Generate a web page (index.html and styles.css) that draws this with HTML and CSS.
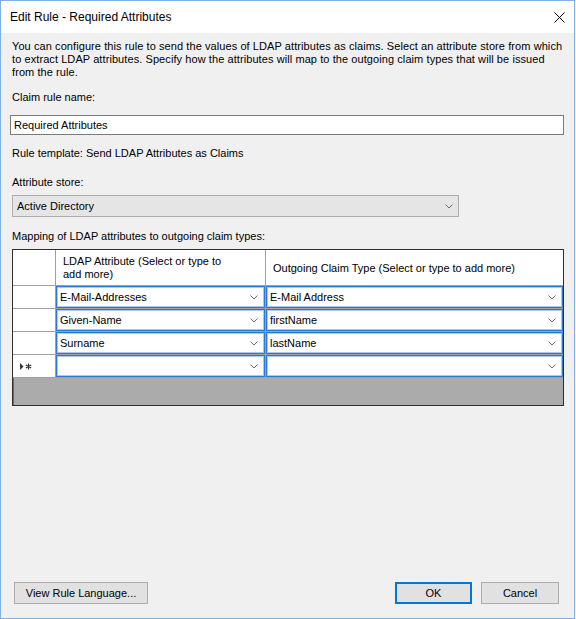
FILE: index.html
```html
<!DOCTYPE html>
<html>
<head>
<meta charset="utf-8">
<link rel="stylesheet" href="styles.css">
</head>
<body>
<div class="window">
  <div class="titlebar">
    <span class="title">Edit Rule - Required Attributes</span>
    <svg class="close" width="11" height="11" viewBox="0 0 11 11"><path d="M0.5 0.5 L10.5 10.5 M10.5 0.5 L0.5 10.5" stroke="#000" stroke-width="1"/></svg>
  </div>
  <div class="body">
    <p class="intro">You can configure this rule to send the values of LDAP attributes as claims. Select an attribute store from which<br>to extract LDAP attributes. Specify how the attributes will map to the outgoing claim types that will be issued<br>from the rule.</p>
    <p class="label label-name">Claim rule name:</p>
    <div class="textbox">Required Attributes</div>
    <p class="label label-template">Rule template: Send LDAP Attributes as Claims</p>
    <p class="label label-store">Attribute store:</p>
    <div class="combo">
      <span>Active Directory</span>
      <svg class="chev" width="8" height="5" viewBox="0 0 8 5"><path d="M0.5 0.5 L4 4 L7.5 0.5" fill="none" stroke="#6d6d6d" stroke-width="1"/></svg>
    </div>
    <p class="label label-mapping">Mapping of LDAP attributes to outgoing claim types:</p>
    <div class="grid">
      <div class="cell rowhdr"></div>
      <div class="cell colhdr">LDAP Attribute (Select or type to<br>add more)</div>
      <div class="cell colhdr last">Outgoing Claim Type (Select or type to add more)</div>

      <div class="cell rowhdr"></div>
      <div class="cell data"><div class="cellcombo"><span>E-Mail-Addresses</span><svg class="chev" width="8" height="5" viewBox="0 0 8 5"><path d="M0.5 0.5 L4 4 L7.5 0.5" fill="none" stroke="#6d6d6d" stroke-width="1"/></svg></div></div>
      <div class="cell data last"><div class="cellcombo"><span>E-Mail Address</span><svg class="chev" width="8" height="5" viewBox="0 0 8 5"><path d="M0.5 0.5 L4 4 L7.5 0.5" fill="none" stroke="#6d6d6d" stroke-width="1"/></svg></div></div>

      <div class="cell rowhdr"></div>
      <div class="cell data"><div class="cellcombo"><span>Given-Name</span><svg class="chev" width="8" height="5" viewBox="0 0 8 5"><path d="M0.5 0.5 L4 4 L7.5 0.5" fill="none" stroke="#6d6d6d" stroke-width="1"/></svg></div></div>
      <div class="cell data last"><div class="cellcombo"><span>firstName</span><svg class="chev" width="8" height="5" viewBox="0 0 8 5"><path d="M0.5 0.5 L4 4 L7.5 0.5" fill="none" stroke="#6d6d6d" stroke-width="1"/></svg></div></div>

      <div class="cell rowhdr"></div>
      <div class="cell data"><div class="cellcombo"><span>Surname</span><svg class="chev" width="8" height="5" viewBox="0 0 8 5"><path d="M0.5 0.5 L4 4 L7.5 0.5" fill="none" stroke="#6d6d6d" stroke-width="1"/></svg></div></div>
      <div class="cell data last"><div class="cellcombo"><span>lastName</span><svg class="chev" width="8" height="5" viewBox="0 0 8 5"><path d="M0.5 0.5 L4 4 L7.5 0.5" fill="none" stroke="#6d6d6d" stroke-width="1"/></svg></div></div>

      <div class="cell rowhdr newrow"><svg width="12" height="7" viewBox="0 0 12 7"><path d="M0 0 L3.5 3.5 L0 7 Z" fill="#333"/><path d="M8.5 0.5 V6.5 M5.8 2 L11.2 5 M5.8 5 L11.2 2" stroke="#333" stroke-width="1.2"/></svg></div>
      <div class="cell data"><div class="cellcombo"><span></span><svg class="chev" width="8" height="5" viewBox="0 0 8 5"><path d="M0.5 0.5 L4 4 L7.5 0.5" fill="none" stroke="#6d6d6d" stroke-width="1"/></svg></div></div>
      <div class="cell data last"><div class="cellcombo"><span></span><svg class="chev" width="8" height="5" viewBox="0 0 8 5"><path d="M0.5 0.5 L4 4 L7.5 0.5" fill="none" stroke="#6d6d6d" stroke-width="1"/></svg></div></div>
    </div>
    <div class="spacer"></div>
    <div class="footer">
      <button class="btn btn-view">View Rule Language...</button>
      <div class="footer-right">
        <button class="btn btn-ok">OK</button>
        <button class="btn btn-cancel">Cancel</button>
      </div>
    </div>
  </div>
</div>
</body>
</html>
```
FILE: styles.css
```css
* { box-sizing: border-box; }
html, body { margin: 0; padding: 0; background: #ffffff; }
body {
  font-family: "Liberation Sans", Arial, sans-serif;
  font-size: 11px;
  color: #000;
}
.window {
  width: 575px;
  height: 619px;
  border: 1px solid #7fb0e2;
  display: flex;
  flex-direction: column;
  background: #f0f0f0;
}
.titlebar {
  height: 32px;
  flex: none;
  background: #fff;
  display: flex;
  align-items: center;
  justify-content: space-between;
  padding: 0 9px 0 9px;
}
.title { font-size: 12px; }
.close { display: block; margin-top: 0; }
.body {
  flex: 1;
  display: flex;
  flex-direction: column;
  padding: 0 10px 14px 11px;
}
p { margin: 0; }
.intro { margin-top: 7px; line-height: 13px; white-space: nowrap; letter-spacing: 0.08px; }
.label { line-height: 13px; white-space: nowrap; }
.label-name { margin-top: 12px; }
.label-template { margin-top: 12px; }
.label-store { margin-top: 16px; }
.label-mapping { margin-top: 13px; }
.textbox {
  margin-top: 11px;
  margin-left: -2px;
  height: 20px;
  border: 1px solid #7a7a7a;
  background: #fff;
  line-height: 18px;
  padding-left: 3px;
}
.combo {
  margin-top: 6px;
  width: 447px;
  height: 22px;
  border: 1px solid #adadad;
  background: #e5e5e5;
  display: flex;
  align-items: center;
  justify-content: space-between;
  padding: 0 5px 0 4px;
}
.chev { display: block; flex: none; }
.grid {
  margin-top: 6px;
  width: 552px;
  height: 157px;
  border: 1px solid #2e2e2e;
  box-shadow: inset 1px 1px 0 #6a6a6a;
  background: #ababab;
  display: grid;
  grid-template-columns: 43px 210px 1fr;
  grid-template-rows: 36px repeat(4, 23px) 1fr;
}
.cell {
  background: #fff;
  border-right: 1px solid #a0a0a0;
  border-bottom: 1px solid #a0a0a0;
}
.cell.last { border-right: none; }
.colhdr {
  display: flex;
  align-items: center;
  padding-left: 7px;
  line-height: 13px;
  padding-top: 1px;
}
.data { display: flex; }
.cellcombo {
  flex: 1;
  display: flex;
  align-items: center;
  justify-content: space-between;
  border: 1px solid #2d7ad6;
  box-shadow: inset 0 0 0 1px #a9c9ef;
  padding: 0 6px 0 3px;
  background: #fff;
}
.newrow {
  display: flex;
  align-items: center;
  padding-left: 7px;
}
.newrow svg { display: block; }
.spacer { flex: 1; }
.footer {
  display: flex;
  justify-content: space-between;
  margin: 0 5px 0 2px;
}
.footer-right { display: flex; gap: 9px; }
.btn {
  font-family: "Liberation Sans", Arial, sans-serif;
  font-size: 11px;
  color: #000;
  height: 22px;
  background: #e1e1e1;
  border: 1px solid #adadad;
  padding: 0;
  margin: 0;
}
.btn-view { width: 134px; }
.btn-ok {
  width: 77px;
  border-color: #0078d7;
  box-shadow: inset 0 0 0 1px #0078d7;
}
.btn-cancel { width: 78px; }
```
